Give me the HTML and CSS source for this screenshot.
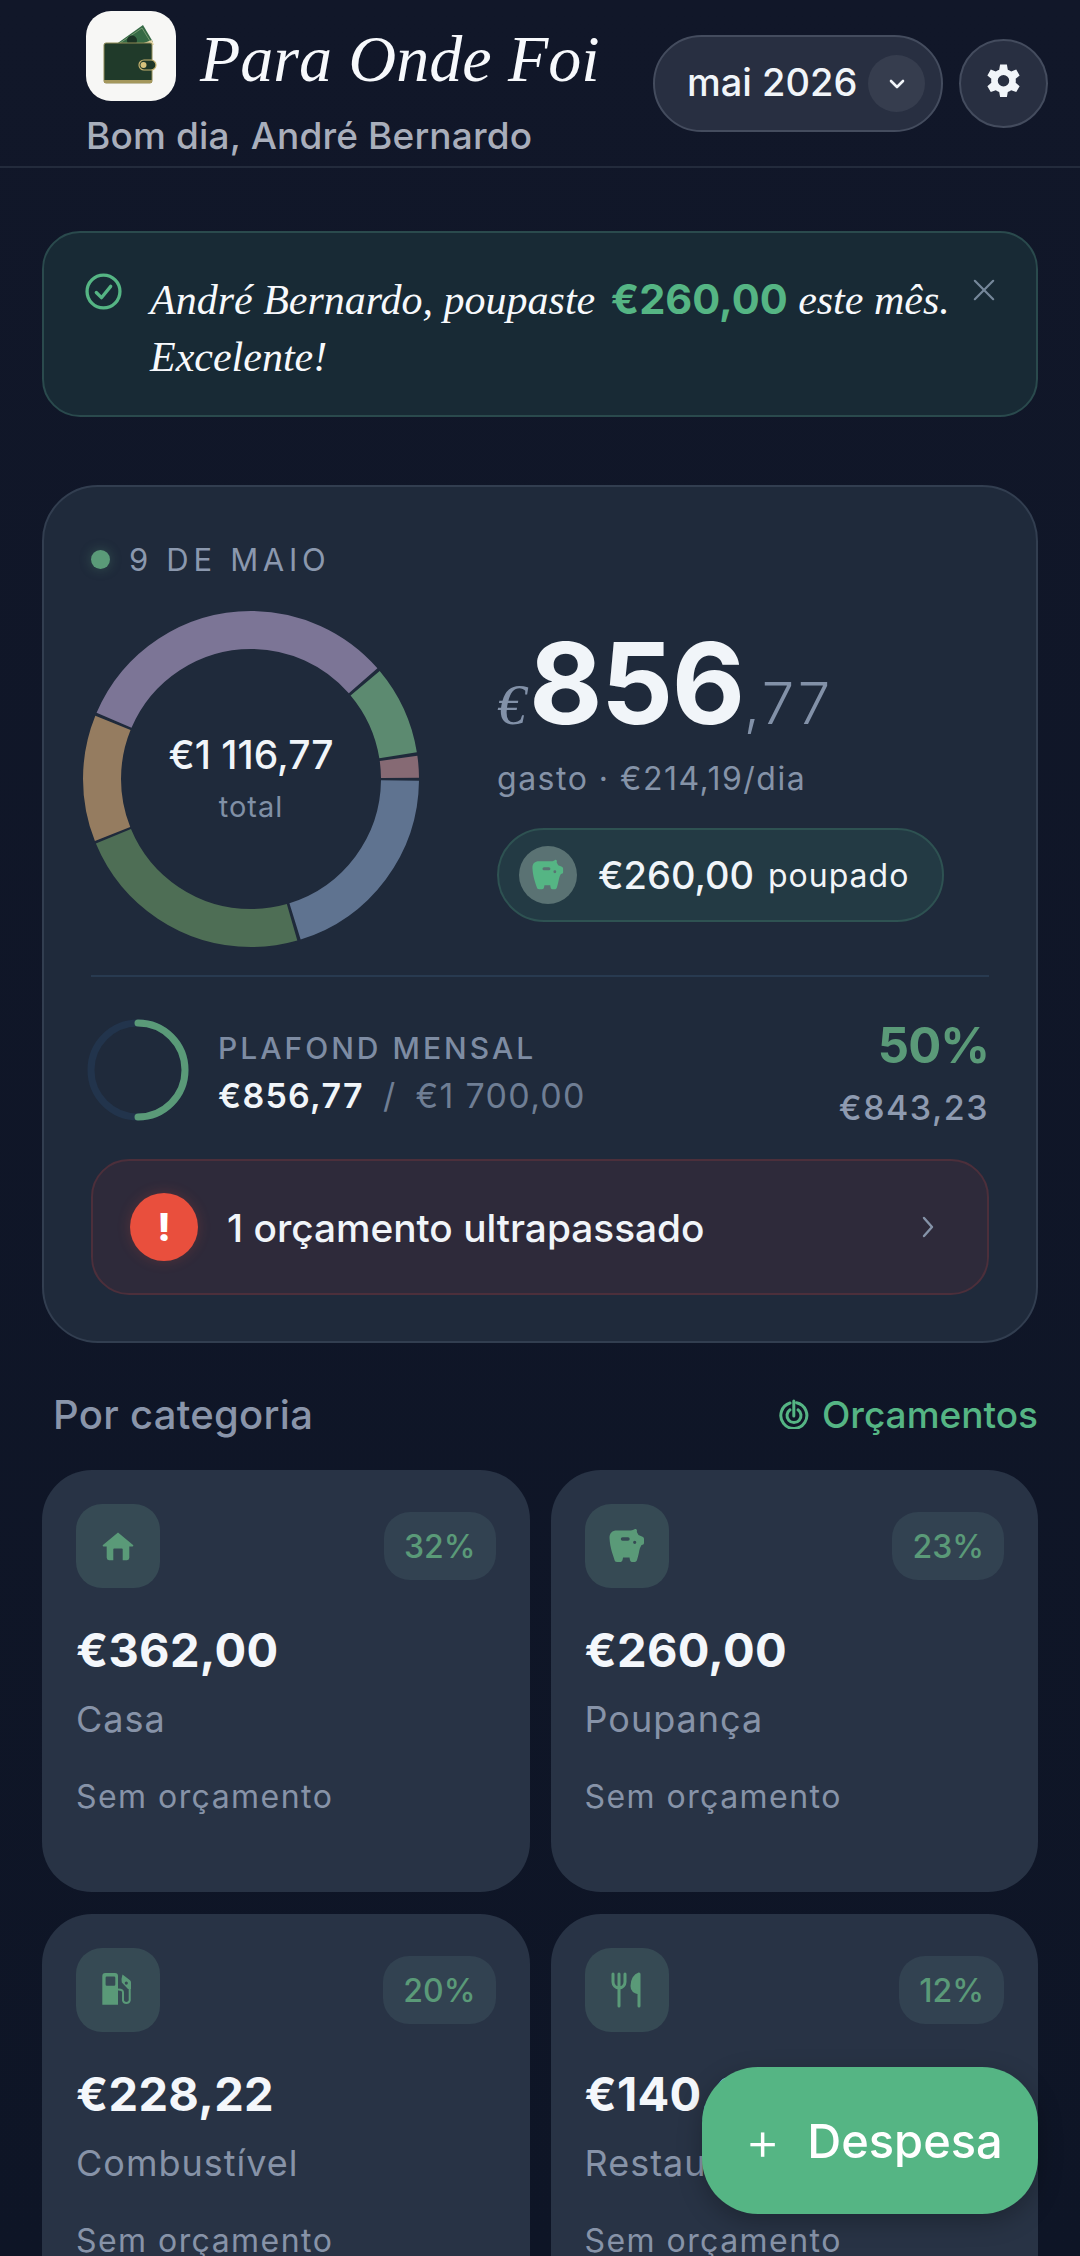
FILE: index.html
```html
<!DOCTYPE html>
<html lang="pt">
<head>
<meta charset="utf-8">
<title>Para Onde Foi</title>
<link rel="stylesheet" href="styles.css">
</head>
<body>
<header class="topbar">
  <div class="brand">
    <div class="brand-row">
      <svg class="logo" viewBox="0 0 90 90" aria-hidden="true">
        <rect width="90" height="90" rx="25" fill="#f7f7f5"/>
        <path d="M29 34 L57 14 L67 31 L54 36 Z" fill="#356a45"/>
        <path d="M34 32 L56 17 L64 30" fill="none" stroke="#86a67c" stroke-width=".8"/>
        <circle cx="46" cy="29.500" r="5" fill="#1a3324"/>
        <path d="M55 33 L66 29 L68 34 Z" fill="#e4d5a8"/>
        <rect x="18" y="32" width="48" height="40" rx="2" fill="#203a2a" stroke="#8f8a55" stroke-width="1"/>
        <rect x="18" y="69" width="48" height="3" fill="#a4975c"/>
        <rect x="53" y="49" width="17" height="10" rx="5" fill="#1e3627" stroke="#c4b16f" stroke-width="1.200"/>
        <circle cx="57.500" cy="54" r="3" fill="#d7c27d"/>
      </svg>
      <h1 class="brand-title">Para Onde Foi</h1>
    </div>
    <p class="greeting">Bom dia, André Bernardo</p>
  </div>
  <div class="top-actions">
    <div class="month-pill">
      <span>mai 2026</span>
      <span class="month-chevron">
        <svg viewBox="0 0 24 24" width="24" height="24" fill="none" stroke="#f1f5f9" stroke-width="2.600" stroke-linecap="round" stroke-linejoin="round"><path d="M6 9l6 6 6-6"/></svg>
      </span>
    </div>
    <div class="gear-btn">
      <svg viewBox="0 0 24 24" width="43" height="43" fill="#f1f5f9"><path fill-rule="evenodd" d="M13.900 1.400h-3.800l-.5 2.900c-.7.2-1.300.6-1.900 1L4.900 4.200 3 7.500l2.200 1.900c-.1.7-.1 1.500 0 2.200L3 13.500l1.900 3.300 2.800-1.100c.6.400 1.200.8 1.900 1l.5 2.900h3.800l.5-2.900c.7-.2 1.300-.6 1.900-1l2.800 1.100 1.900-3.300-2.200-1.900c.1-.7.1-1.500 0-2.200L21 7.500l-1.900-3.300-2.800 1.100c-.6-.4-1.200-.8-1.900-1l-.5-2.900zM12 7.300a3.200 3.200 0 1 1 0 6.400 3.200 3.200 0 0 1 0-6.400z"/></svg>
    </div>
  </div>
</header>

<main class="content">
  <section class="banner">
    <svg class="banner-check" viewBox="0 0 36 36" fill="none" stroke="#55b584" stroke-width="3.200" stroke-linecap="round" stroke-linejoin="round"><circle cx="18" cy="18" r="16"/><path d="M11 19l5 5 9-11"/></svg>
    <p class="banner-text">André Bernardo, poupaste <strong>€260,00</strong> este mês. Excelente!</p>
    <svg class="banner-close" viewBox="0 0 24 24" fill="none" stroke="#75879a" stroke-width="2.400" stroke-linecap="round"><path d="M2 2l20 20M22 2L2 22"/></svg>
  </section>

  <section class="hero">
    <div class="date-row"><span class="date-dot"></span><span>9 DE MAIO</span></div>
    <div class="hero-main">
      <div class="donut">
        <svg viewBox="0 0 336 336" width="336" height="336" fill="none" stroke-width="38">
          <circle cx="168" cy="168" r="149" pathLength="360" stroke="#5f7390" stroke-dasharray="72.200 287.800" stroke-dashoffset="-0.600"/>
          <circle cx="168" cy="168" r="149" pathLength="360" stroke="#4e6e55" stroke-dasharray="83.400 276.600" stroke-dashoffset="-74"/>
          <circle cx="168" cy="168" r="149" pathLength="360" stroke="#957c60" stroke-dasharray="43.800 316.200" stroke-dashoffset="-158.300"/>
          <circle cx="168" cy="168" r="149" pathLength="360" stroke="#7c7596" stroke-dasharray="115.600 244.400" stroke-dashoffset="-203.200"/>
          <circle cx="168" cy="168" r="149" pathLength="360" stroke="#5c8a70" stroke-dasharray="30.800 329.200" stroke-dashoffset="-320"/>
          <circle cx="168" cy="168" r="149" pathLength="360" stroke="#866a74" stroke-dasharray="7.600 352.400" stroke-dashoffset="-352"/>
        </svg>
        <div class="donut-center">
          <span class="donut-total">€1 116,77</span>
          <span class="donut-label">total</span>
        </div>
      </div>
      <div class="spent">
        <div class="spent-amount"><span class="cur">€</span><span class="int">856</span><span class="dec">,77</span></div>
        <div class="spent-sub">gasto · €214,19/dia</div>
        <div class="saved-pill">
          <span class="saved-icon">
            <svg class="pig-bright" viewBox="0 0 36 36" width="32" height="32"><use href="#pig"/></svg>
          </span>
          <span class="saved-value">€260,00</span>
          <span class="saved-label">poupado</span>
        </div>
      </div>
    </div>
    <div class="plafond">
      <svg class="plafond-ring" viewBox="0 0 102 102" fill="none" stroke-width="7">
        <circle cx="51" cy="51" r="47" stroke="#22344c"/>
        <path d="M51 4a47 47 0 0 1 0 94" stroke="#5a9a78" stroke-linecap="round"/>
      </svg>
      <div class="plafond-info">
        <div class="plafond-title">PLAFOND MENSAL</div>
        <div class="plafond-values"><b>€856,77</b><i>/</i><span>€1 700,00</span></div>
      </div>
      <div class="plafond-side">
        <div class="plafond-pct">50%</div>
        <div class="plafond-left">€843,23</div>
      </div>
    </div>
    <div class="alert">
      <span class="alert-icon">!</span>
      <span class="alert-text">1 orçamento ultrapassado</span>
      <svg class="alert-chevron" viewBox="0 0 14 24" fill="none" stroke="#8593a8" stroke-width="2.400" stroke-linecap="round" stroke-linejoin="round"><path d="M3 3l8 9-8 9"/></svg>
    </div>
  </section>

  <div class="section-head">
    <h2>Por categoria</h2>
    <div class="section-link">
      <svg viewBox="0 0 30 30" width="30" height="30" fill="none" stroke="#55b584" stroke-width="3" stroke-linecap="round"><path d="M17.500 3.700A13 13 0 1 1 11 4"/><path d="M19 10.800A7 7 0 1 1 11 10.800"/><path d="M14.800 2v15"/></svg>
      <span>Orçamentos</span>
    </div>
  </div>

  <div class="cards">
    <article class="card">
      <div class="card-top">
        <span class="card-icon"><svg viewBox="0 0 34 30" width="32" height="29" fill="#5a9a78"><path d="M17 0 L33 13.500 a.8.8 0 0 1-.6 1.400 H29 V27 a2.500 2.500 0 0 1-2.500 2.500 H22 V18 a1 1 0 0 0-1-1 H13 a1 1 0 0 0-1 1 V29.500 H7.500 A2.500 2.500 0 0 1 5 27 V14.900 H1.600 A.8.8 0 0 1 1 13.500 Z"/></svg></span>
        <span class="card-pct">32%</span>
      </div>
      <div class="card-amount">€362,00</div>
      <div class="card-name">Casa</div>
      <div class="card-note">Sem orçamento</div>
    </article>
    <article class="card">
      <div class="card-top">
        <span class="card-icon"><svg class="pig-muted" viewBox="0 0 36 36" width="36" height="36"><use href="#pig"/></svg></span>
        <span class="card-pct">23%</span>
      </div>
      <div class="card-amount">€260,00</div>
      <div class="card-name">Poupança</div>
      <div class="card-note">Sem orçamento</div>
    </article>
    <article class="card">
      <div class="card-top">
        <span class="card-icon"><svg viewBox="0 0 32 34" width="32" height="34"><path fill="#5a9a78" fill-rule="evenodd" d="M.3 31.700V3a3 3 0 0 1 3-3H13a3 3 0 0 1 3 3v28.700zM4.800 3.600a1.200 1.200 0 0 0-1.200 1.200v6.700a1.200 1.200 0 0 0 1.200 1.200h7.300a1.200 1.200 0 0 0 1.200-1.200V4.800a1.200 1.200 0 0 0-1.200-1.200z"/><path fill="#5a9a78" fill-rule="evenodd" d="M20.500 1.500L28 7.200q1 .8 1 2.300V16h-3L19.800 9.500Q19 6 20.500 1.500zM24.300 8.500a1.600 1.600 0 1 0 0 3.200 1.600 1.600 0 0 0 0-3.200z"/><path d="M27.700 16v11.500a3.500 3.500 0 0 1-6.700 0v-8.200q0-2.800-4.500-2.800" fill="none" stroke="#5a9a78" stroke-width="2" stroke-linecap="round"/></svg></span>
        <span class="card-pct">20%</span>
      </div>
      <div class="card-amount">€228,22</div>
      <div class="card-name">Combustível</div>
      <div class="card-note">Sem orçamento</div>
    </article>
    <article class="card">
      <div class="card-top">
        <span class="card-icon"><svg viewBox="0 0 32 36" width="32" height="36" fill="none" stroke="#5a9a78" stroke-width="3" stroke-linecap="round"><path d="M2 2v8a6 6 0 0 0 12 0V2M8 2v32"/><path d="M28 34V2c-4 1-7 6-7 12 0 4 2 6 7 7z" fill="#5a9a78" stroke-linejoin="round"/></svg></span>
        <span class="card-pct">12%</span>
      </div>
      <div class="card-amount">€140,00</div>
      <div class="card-name">Restaurantes</div>
      <div class="card-note">Sem orçamento</div>
    </article>
  </div>
</main>

<button class="fab" type="button"><span class="fab-plus">+</span><span>Despesa</span></button>

<svg class="defs" width="0" height="0" aria-hidden="true">
  <symbol id="pig" viewBox="0 0 36 36">
    <path fill="currentColor" fill-rule="evenodd" d="M26 1C27.500.5 28.500 2 27.800 4L29.500 7L33 8.500C34.500 9 35 10 35 11V15C35 16 34 17 32.500 17L31 20C30 23 29.500 28 28 32C27.500 33.500 26.500 34 25 34H23C21.500 34 21 33 20.500 29.500H14C13.500 33 13 34 11 34H8C6.500 34 5.800 33 5.500 32C4 27 1 20 .5 10C.5 5 3 2.500 8 2.500H18C20 2.500 23 3 26 1ZM13.500 9.300a1.700 1.700 0 0 0 0 3.400H19a1.700 1.700 0 0 0 0-3.400ZM25.700 12.700a1.600 1.600 0 1 0 0 3.200 1.600 1.600 0 0 0 0-3.200Z"/>
  </symbol>
</svg>
</body>
</html>
```
FILE: styles.css
```css
* { box-sizing: border-box; margin: 0; padding: 0; }
html, body { height: 2256px; overflow: hidden; }
body {
  background: linear-gradient(180deg, #111729 0%, #0e1526 100%);
  font-family: Inter, "Liberation Sans", sans-serif;
  color: #f1f5f9;
}
.defs { position: absolute; }
.pig-bright { color: #55b584; }
.pig-muted { color: #5a9a78; }

.topbar {
  height: 168px;
  display: flex;
  justify-content: space-between;
  align-items: flex-start;
  padding: 11px 32px 0 86px;
  border-bottom: 2px solid #232b3c;
}
.brand-row { display: flex; align-items: center; gap: 24px; height: 90px; }
.logo { width: 90px; height: 90px; flex: none; }
.brand-title {
  margin-top: 6px;
  font-family: "Liberation Serif", serif;
  font-style: italic;
  font-weight: 400;
  font-size: 66px;
  line-height: 90px;
  color: #f7f9fc;
  white-space: nowrap;
}
.greeting { margin-top: 13px; font-size: 37px; line-height: 44px; font-weight: 500; letter-spacing: .15px; color: #a9aebb; }
.top-actions { display: flex; align-items: center; gap: 16px; margin-top: 24px; }
.month-pill {
  width: 290px;
  height: 97px;
  display: flex;
  align-items: center;
  justify-content: space-between;
  padding: 0 16px 0 32px;
  background: #282f41;
  border: 2px solid #444c5e;
  border-radius: 49px;
  font-size: 38px;
  font-weight: 500;
  line-height: 44px;
}
.month-pill > span:first-child { margin-top: -3px; }
.month-chevron {
  width: 57px;
  height: 57px;
  border-radius: 50%;
  background: #363d4e;
  display: flex;
  align-items: center;
  justify-content: center;
}
.gear-btn {
  width: 89px;
  height: 89px;
  border-radius: 50%;
  background: #282f41;
  border: 2px solid #444c5e;
  display: flex;
  align-items: center;
  justify-content: center;
}

.content { padding: 63px 42px 0; }

.banner {
  height: 186px;
  display: flex;
  align-items: flex-start;
  background: #182a35;
  border: 2px solid #2a4a4d;
  border-radius: 38px;
  padding: 40px 40px 0 41px;
}
.banner-check { width: 37px; height: 37px; flex: none; }
.banner-text {
  flex: 1;
  margin: -2px 0 0 28px;
  font-family: "Liberation Serif", serif;
  font-style: italic;
  font-size: 42px;
  line-height: 57px;
  color: #f7f9fc;
}
.banner-text strong { margin-left: 5px; font-family: Inter, sans-serif; font-style: normal; font-weight: 700; font-size: 41.500px; color: #55b584; }
.banner-close { width: 24px; height: 22px; flex: none; margin-top: 6px; }

.hero {
  height: 858px;
  margin-top: 68px;
  background: #1f2a3b;
  border: 2px solid #323e50;
  border-radius: 56px;
  padding: 54px 47px 0 47px;
}
.date-row {
  display: flex;
  align-items: center;
  gap: 19px;
  height: 36px;
  font-size: 31px;
  letter-spacing: 4.700px;
  color: #8b98ae;
}
.date-dot {
  width: 19px;
  height: 19px;
  border-radius: 50%;
  background: #5a9a78;
  box-shadow: 0 0 12px rgba(90, 154, 120, .35);
}
.hero-main { display: flex; align-items: flex-start; margin-top: 34px; }
.donut { position: relative; width: 336px; height: 336px; margin-left: -8px; flex: none; }
.donut-center {
  position: absolute;
  inset: 0;
  display: flex;
  flex-direction: column;
  align-items: center;
  justify-content: center;
}
.donut-total { font-size: 39px; line-height: 48px; font-weight: 500; margin-top: -2px; }
.donut-label { font-size: 29px; line-height: 36px; margin-top: 10px; color: #8090a6; letter-spacing: 1px; }

.spent { margin-left: 78px; }
.spent-amount { display: flex; align-items: baseline; height: 112px; margin-top: 16px; line-height: 112px; }
.spent-amount .cur { font-family: "Liberation Serif", serif; font-style: italic; font-size: 58px; color: #8291a8; }
.spent-amount .int { font-size: 113px; font-weight: 700; letter-spacing: -1.500px; margin-left: 3px; }
.spent-amount .dec { font-size: 58px; font-weight: 300; color: #8291a8; letter-spacing: 2.500px; margin-left: 0; }
.spent-sub { margin-top: 20px; font-size: 32px; line-height: 40px; letter-spacing: 1.500px; color: #8593a8; }
.saved-pill {
  width: 447px;
  height: 94px;
  margin-top: 29px;
  display: flex;
  align-items: center;
  padding-left: 20px;
  background: #233a44;
  border: 2px solid #2e5252;
  border-radius: 47px;
}
.saved-icon {
  width: 58px;
  height: 58px;
  border-radius: 50%;
  background: #5a7273;
  display: flex;
  align-items: center;
  justify-content: center;
}
.saved-value { margin-left: 21px; font-size: 38px; font-weight: 500; }
.saved-label { margin-left: 14px; font-size: 32px; letter-spacing: 1px; }

.plafond {
  display: flex;
  align-items: center;
  height: 184px;
  margin-top: 28px;
  padding-top: 28px;
  border-top: 2px solid #283a50;
}
.plafond-ring { width: 102px; height: 102px; flex: none; margin-left: -4px; margin-top: -25px; }
.plafond-info { margin-left: 29px; margin-top: -18px; flex: 1; }
.plafond-title { font-size: 30px; line-height: 36px; letter-spacing: 3px; color: #7e8ca3; font-weight: 500; }
.plafond-values { margin-top: 10px; font-size: 34px; line-height: 40px; letter-spacing: 1.300px; color: #6f7e94; display: flex; gap: 19px; }
.plafond-values b { color: #f1f5f9; font-weight: 600; }
.plafond-values i { font-style: normal; }
.plafond-side { text-align: right; margin: -21px 0 0 0; }
.plafond-pct { font-size: 49px; line-height: 60px; font-weight: 700; letter-spacing: -1px; color: #5a9a78; }
.plafond-left { margin-top: 12px; font-size: 34px; line-height: 40px; font-weight: 500; letter-spacing: 1.500px; color: #8e9ab0; }

.alert {
  height: 136px;
  display: flex;
  align-items: center;
  padding: 0 52px 0 37px;
  background: #2e2a3a;
  border: 2px solid #4c2f3b;
  border-radius: 38px;
}
.alert-icon {
  width: 68px;
  height: 68px;
  border-radius: 50%;
  background: #e94f3d;
  box-shadow: 0 0 14px rgba(233, 79, 61, .2);
  display: flex;
  align-items: center;
  justify-content: center;
  font-size: 38px;
  font-weight: 800;
  color: #fff;
}
.alert-text { margin-left: 29px; flex: 1; font-size: 38.800px; font-weight: 500; }
.alert-chevron { width: 14px; height: 24px; }

.section-head {
  display: flex;
  justify-content: space-between;
  align-items: center;
  height: 48px;
  margin-top: 47px;
  padding-left: 11px;
}
.section-head h2 { font-size: 40px; font-weight: 500; letter-spacing: .3px; color: #8a95aa; }
.section-link { display: flex; align-items: center; gap: 13px; font-size: 37px; font-weight: 500; color: #55b584; }

.cards {
  display: grid;
  grid-template-columns: repeat(2, 1fr);
  grid-auto-rows: 422px;
  gap: 22px 21px;
  margin-top: 32px;
}
.card { background: #283345; border-radius: 50px; padding: 34px; }
.card-top { display: flex; justify-content: space-between; align-items: center; }
.card-icon {
  width: 84px;
  height: 84px;
  border-radius: 26px;
  background: #364a54;
  display: flex;
  align-items: center;
  justify-content: center;
}
.card-pct {
  height: 68px;
  padding: 0 20px;
  border-radius: 26px;
  background: #324251;
  display: flex;
  align-items: center;
  font-size: 32px;
  font-weight: 500;
  color: #5a9a78;
}
.card-amount { margin-top: 34px; font-size: 47px; line-height: 56px; font-weight: 700; letter-spacing: .3px; color: #f4f7fb; }
.card-name { margin-top: 20px; font-size: 36px; line-height: 42px; letter-spacing: 1px; color: #8793a8; }
.card-note { margin-top: 38px; font-size: 32px; line-height: 38px; letter-spacing: 1.450px; color: #8793a8; }

.fab {
  position: fixed;
  left: 702px;
  top: 2067px;
  width: 336px;
  height: 147px;
  display: flex;
  align-items: center;
  gap: 27px;
  padding-left: 43px;
  border: 0;
  border-radius: 56px;
  background: #55b584;
  box-shadow: 0 8px 24px rgba(0, 0, 0, .25);
  color: #fff;
  font-family: Inter, sans-serif;
  font-size: 47px;
  font-weight: 500;
}
.fab-plus { font-size: 54px; font-weight: 300; }
```
